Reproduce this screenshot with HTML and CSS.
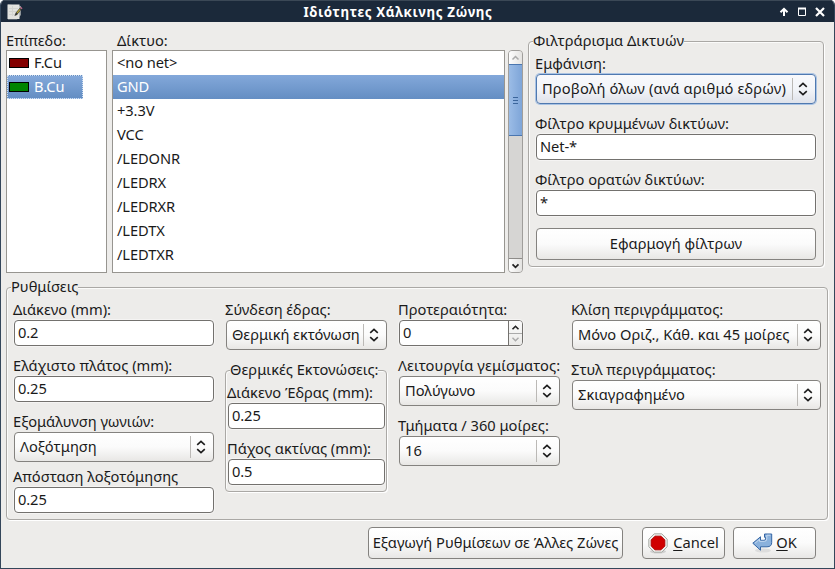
FILE: index.html
```html
<!DOCTYPE html>
<html lang="el">
<head>
<meta charset="utf-8">
<title>Ιδιότητες Χάλκινης Ζώνης</title>
<link rel="stylesheet" href="styles.css">
</head>
<body>
<svg class="defs" width="0" height="0">
  <symbol id="updown" viewBox="0 0 10 14"><path d="M1.200 4.800 5 1.300l3.800 3.500M1.200 9.200 5 12.700l3.800-3.500" fill="none" stroke="#1c1c1c" stroke-width="1.600"/></symbol>
</svg>
<div class="window">
  <header class="titlebar">
    <svg class="app-icon" width="16" height="16" viewBox="0 0 16 16">
      <path d="M.5.500h12v14.500H.5z" fill="#e9e9e6"/>
      <path d="M2 4.500h9M2 7.500h8M2 10.500h6M5.500 2v10" stroke="#c4c5c2" fill="none"/>
      <path d="M1 .500 14 2v9l-4 4.500H1z" fill="#deded9" opacity=".6"/>
      <path d="m7.500 12 1-3L13 3.800l1.600 1.500L10 11z" fill="#393a35"/>
      <path d="m9.500 8.500 3-3.500 1 1-3 3.500z" fill="#b4a33c"/>
      <path d="m13 3.800 1-1 1.500 1.400-.9 1.100z" fill="#c06a88"/>
    </svg>
    <h1>Ιδιότητες Χάλκινης Ζώνης</h1>
    <svg class="controls" width="52" height="12" viewBox="0 0 52 12">
      <path d="M5 10V4M1.500 6.300 5 2.800 8.500 6.300" fill="none" stroke="#fff" stroke-width="2"/>
      <path d="M19.500 2.500h7v7h-7z" fill="none" stroke="#fff"/><path d="M19 2.500h8" stroke="#fff" stroke-width="2"/>
      <path d="m37 2 8 8m0-8-8 8" stroke="#fff" stroke-width="2.200"/>
    </svg>
  </header>
  <main>
    <section class="top">
      <div class="layers">
        <label>Επίπεδο:</label>
        <ul class="list">
          <li><i class="swatch red"></i><span>F.Cu</span></li>
          <li class="selected"><i class="swatch green"></i><span>B.Cu</span></li>
        </ul>
      </div>
      <div class="nets">
        <label>Δίκτυο:</label>
        <div class="net-body">
          <ul class="list">
            <li>&lt;no net&gt;</li><li class="selected">GND</li><li>+3.3V</li><li>VCC</li><li>/LEDONR</li><li>/LEDRX</li><li>/LEDRXR</li><li>/LEDTX</li><li>/LEDTXR</li>
          </ul>
          <div class="scrollbar">
            <span class="arrow"><svg width="9" height="6"><path d="M1.500 4.500l3-3 3 3" fill="none" stroke="#aaa" stroke-width="1.500"/></svg></span>
            <span class="thumb"><i></i><i></i><i></i></span>
            <span class="track"></span>
            <span class="arrow end"><svg width="9" height="6"><path d="M1.500 1.300l3 3 3-3" fill="none" stroke="#222" stroke-width="1.700"/></svg></span>
          </div>
        </div>
      </div>
      <div class="group filter">
        <span class="legend">Φιλτράρισμα Δικτυών</span>
        <label>Εμφάνιση:</label>
        <div class="combo focus"><span>Προβολή όλων (ανά αριθμό εδρών)</span><svg><use href="#updown"/></svg></div>
        <label>Φίλτρο κρυμμένων δικτύων:</label>
        <div class="input">Net-*</div>
        <label>Φίλτρο ορατών δικτύων:</label>
        <div class="input">*</div>
        <div class="button apply">Εφαρμογή φίλτρων</div>
      </div>
    </section>
    <section class="group settings">
      <span class="legend">Ρυθμίσεις</span>
      <div class="col c1">
        <label>Διάκενο (mm):</label><div class="input">0.2</div>
        <label>Ελάχιστο πλάτος (mm):</label><div class="input">0.25</div>
        <label>Εξομάλυνση γωνιών:</label><div class="combo"><span>Λοξότμηση</span><svg><use href="#updown"/></svg></div>
        <label class="tight">Απόσταση λοξοτόμησης</label><div class="input">0.25</div>
      </div>
      <div class="col c2">
        <label>Σύνδεση έδρας:</label><div class="combo"><span>Θερμική εκτόνωση</span><svg><use href="#updown"/></svg></div>
        <div class="group relief">
          <span class="legend">Θερμικές Εκτονώσεις:</span>
          <label>Διάκενο Έδρας (mm):</label><div class="input">0.25</div>
          <label>Πάχος ακτίνας (mm):</label><div class="input">0.5</div>
        </div>
      </div>
      <div class="col c3">
        <label>Προτεραιότητα:</label>
        <div class="input spin"><span>0</span>
          <svg width="13" height="24"><path d="M0 12.500h13" stroke="#aaa"/><path d="M3.500 8.300l3-3 3 3" fill="none" stroke="#222" stroke-width="1.600"/><path d="M3.500 16.700l3 3 3-3" fill="none" stroke="#aaa" stroke-width="1.400"/></svg>
        </div>
        <label class="fill-mode">Λειτουργία γεμίσματος:</label><div class="combo"><span>Πολύγωνο</span><svg><use href="#updown"/></svg></div>
        <label>Τμήματα / 360 μοίρες:</label><div class="combo"><span>16</span><svg><use href="#updown"/></svg></div>
      </div>
      <div class="col c4">
        <label>Κλίση περιγράμματος:</label><div class="combo"><span>Μόνο Οριζ., Κάθ. και 45 μοίρες</span><svg><use href="#updown"/></svg></div>
        <label>Στυλ περιγράμματος:</label><div class="combo"><span>Σκιαγραφημένο</span><svg><use href="#updown"/></svg></div>
      </div>
    </section>
    <footer>
      <div class="button export">Εξαγωγή Ρυθμίσεων σε Άλλες Ζώνες</div>
      <div class="button cancel">
        <svg width="20" height="21" viewBox="0 0 20 21"><ellipse cx="10" cy="18.500" rx="8" ry="2" fill="#d0d0d0"/><path d="M6.200 .800h7.600l5.400 5.400v7.600l-5.400 5.400H6.200L.800 13.800V6.200z" fill="#eeeeec" stroke="#a9aba5"/><path d="M7 3.200h6L16.800 7v6L13 16.800H7L3.200 13V7z" fill="#d00000" stroke="#b50000"/></svg>
        <span><u>C</u>ancel</span>
      </div>
      <div class="button ok">
        <svg width="21" height="20" viewBox="0 0 21 20"><ellipse cx="11" cy="17.500" rx="8" ry="2" fill="#ddd"/><path d="M.8 10.200 8.500 3.800v3.500h3.700q1.300 0 1.300-1.500V4.300h-1V1h7.200v8.500q0 4.300-4.700 4.300H8.500v3.400z" fill="#8ab1dc" stroke="#3465a4"/><path d="M3 10.200 7.500 6.300v2h5q2.300 0 2.300-2.500V2.200h3.600" fill="none" stroke="#c5daf0"/></svg>
        <span><u>O</u>K</span>
      </div>
    </footer>
  </main>
</div>
</body>
</html>
```
FILE: styles.css
```css
* { box-sizing: border-box; }
body { margin: 0; background: #fff; color: #1a1a1a; font: 14.667px/18px "Noto Sans", sans-serif; }
.defs { position: absolute; }
.window { width: 835px; height: 569px; border: 1px solid #34465a; border-top-width: 0; border-radius: 5px 5px 0 0; background: #edecea; overflow: hidden; }
.titlebar { height: 22px; display: flex; align-items: center; padding: 0 3px 0 6px; background: #1b293a; border-top: 1px solid #3b4856; color: #fff; }
.titlebar h1 { flex: 1; margin: 0; padding-right: 6px; text-align: center; font-size: 13.333px; letter-spacing: .66px; line-height: 20px; white-space: nowrap; }
.controls { margin-top: 1px; }
ul { list-style: none; margin: 0; padding: 0; }
label { display: block; height: 20px; white-space: nowrap; }
.top { display: flex; height: 251px; padding: 9px 0 0 5px; }
.layers { width: 101px; margin-right: 5px; }
.nets { width: 411px; margin-right: 5px; }
.top > div > label { height: 19px; }
.nets > label { padding-left: 5px; }
.list { height: 223px; border: 1px solid #979590; background: #fff; }
.list li { height: 24px; line-height: 22px; padding-left: 4px; letter-spacing: -.1px; }
.list .selected { color: #fff; background: linear-gradient(#83a8da, #648ec3); }
.layers li { width: 76px; display: flex; align-items: center; padding-left: 2px; }
.layers li span { padding-bottom: 2px; }
.layers .selected { border: 1px dotted #d3e1f2; padding-left: 1px; }
.swatch { width: 20px; height: 10px; border: 1px solid #000; margin-right: 5px; }
.red { background: #840000; }
.green { background: #008400; }
.net-body { display: flex; }
.net-body .list { width: 393px; margin-right: 3px; }
.scrollbar { width: 15px; height: 223px; display: flex; flex-direction: column; border: 1px solid #a09e9b; border-radius: 4px; background: #d6d5d3; overflow: hidden; }
.arrow { height: 13px; display: flex; align-items: center; justify-content: center; background: linear-gradient(90deg, #fdfdfd, #e4e3e1); }
.arrow.end { height: 14px; border-top: 1px solid #8e8c89; }
.thumb { height: 72px; margin: 0 -1px; border: 1px solid #4a76b0; background: linear-gradient(90deg, #9bbce6, #7ea5d8); display: flex; flex-direction: column; align-items: center; justify-content: center; gap: 2px; }
.thumb i { width: 5px; height: 1px; background: #3b659b; }
.track { flex: 1; }
.group { position: relative; border: 1px solid #aaa8a5; border-radius: 4px; box-shadow: 1px 1px 0 #fff, inset 1px 1px 0 #fbfbfa; }
.legend { position: absolute; left: 4px; top: -11px; background: #edecea; white-space: nowrap; height: 20px; }
.filter { width: 296px; height: 226px; margin-top: 10px; padding: 12px 7px 0; }
.filter label { margin-left: -1px; }
.top > .filter > label { height: 20px; }
.input, .combo, .button { border: 1px solid #84827f; border-radius: 4px; white-space: nowrap; color: #1a1a1a; }
.input { height: 26px; line-height: 22px; padding-left: 3px; background: #fff; border-color: #73716e; box-shadow: 0 0 0 1px #f5f4f3; margin-bottom: 10px; letter-spacing: -.1px; }
.combo { height: 30px; display: flex; align-items: center; padding: 0 5px; margin-bottom: 10px; background: linear-gradient(#fff, #fbfbfb 50%, #e8e7e5); }
.combo span { flex: 1; padding-bottom: 2px; }
.combo svg { flex: none; width: 18px; height: 22px; padding: 4px 1px 4px 4px; border-left: 1px solid #bbb9b6; overflow: visible; }
.combo.focus { border-color: #4f79b0; background: linear-gradient(#f8f9fc, #f3f5f9 50%, #dfe2ea); box-shadow: 0 0 0 1px #aac3e3; letter-spacing: .15px; }
.button { height: 32px; display: flex; align-items: center; justify-content: center; padding-bottom: 2px; background: linear-gradient(#fff, #fbfbfb 50%, #e8e7e5); }
.button svg { margin-top: 2px; }
.apply { margin-top: 12px; }
.settings { display: flex; width: 822px; height: 233px; margin: 14px 0 0 5px; padding: 12px 0 0 6px; }
.col > label, .relief label { margin-left: -1px; }
.col { padding-left: 1px; }
.c1 { width: 201px; margin-right: 11px; }
.c1 .tight { margin-top: -5px; }
.c2 { width: 162px; margin-right: 11px; }
.c2 > .combo { letter-spacing: -.08px; }
.relief { margin: 20px 0 0 -1px; height: 122px; padding: 12px 1px 0 2px; }
.c3 { width: 162px; margin-right: 11px; }
.c3 .fill-mode { letter-spacing: .08px; }
.c4 { width: 250px; }
.spin { width: 124px; display: flex; }
.spin span { flex: 1; border-right: 1px solid #73716e; }
.spin svg { background: linear-gradient(#fbfbfb, #ebeae8); border-radius: 0 3px 3px 0; }
footer { display: flex; justify-content: flex-end; padding: 7px 18px 0 0; }
.export { width: 255px; margin-right: 19px; }
.cancel { width: 83px; margin-right: 8px; gap: 5px; }
.ok { width: 83px; gap: 3px; }
u { text-underline-offset: 2px; }
```
